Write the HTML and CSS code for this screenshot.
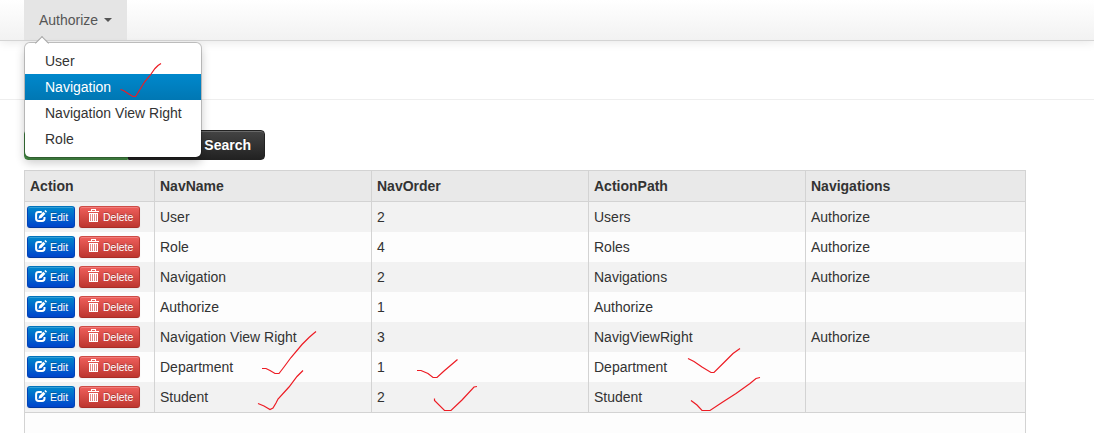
FILE: index.html
```
<!DOCTYPE html>
<html lang="en">
<head>
<meta charset="utf-8">
<title>Navigation</title>
<link rel="stylesheet" href="styles.css">
</head>
<body>
<svg class="sprite" aria-hidden="true">
  <symbol id="edit" viewBox="0 0 12 12">
    <path d="M6.800 2H3.500Q1.100 2 1.100 4.400V8.500Q1.100 10.900 3.500 10.900H7.100Q9.500 10.900 9.500 8.500V7" fill="none" stroke="#fff" stroke-width="2"/>
    <path d="M3.500 8.700L4.300 5.700L8.300 1.700L10.400 3.700L6.400 7.900ZM9.300 1L10.400 0L12 1.600L11 2.700Z" fill="#fff"/>
  </symbol>
  <symbol id="trash" viewBox="0 0 11 13">
    <path d="M3 0H8V2H11V3H0V2H3ZM4 1V2H7V1Z" fill="#fff" fill-rule="evenodd"/>
    <path d="M1 4H10V13H1Z" fill="#fff" fill-opacity=".35"/>
    <path d="M1.500 4V13M3.500 4V13M5.500 4V13M7.500 4V13M9.500 4V13M1 4.500H10M1 12.500H10" fill="none" stroke="#fff"/>
  </symbol>
</svg>
<nav class="navbar">
  <div class="nav-item">
    <a class="nav-link">Authorize<span class="caret"></span></a>
    <ul class="menu">
      <li>User</li>
      <li class="active">Navigation</li>
      <li>Navigation View Right</li>
      <li>Role</li>
    </ul>
  </div>
</nav>
<main class="page">
  <hr class="rule">
  <div class="toolbar"><button class="tool create"></button><button class="tool search">Search</button></div>
  <div class="grid">
    <div class="row head"><div>Action</div><div>NavName</div><div>NavOrder</div><div>ActionPath</div><div>Navigations</div></div>
    <div class="row"><div class="actions"><a class="btn edit"><svg><use href="#edit"/></svg>Edit</a><a class="btn delete"><svg><use href="#trash"/></svg>Delete</a></div><div>User</div><div>2</div><div>Users</div><div>Authorize</div></div>
    <div class="row"><div class="actions"><a class="btn edit"><svg><use href="#edit"/></svg>Edit</a><a class="btn delete"><svg><use href="#trash"/></svg>Delete</a></div><div>Role</div><div>4</div><div>Roles</div><div>Authorize</div></div>
    <div class="row"><div class="actions"><a class="btn edit"><svg><use href="#edit"/></svg>Edit</a><a class="btn delete"><svg><use href="#trash"/></svg>Delete</a></div><div>Navigation</div><div>2</div><div>Navigations</div><div>Authorize</div></div>
    <div class="row"><div class="actions"><a class="btn edit"><svg><use href="#edit"/></svg>Edit</a><a class="btn delete"><svg><use href="#trash"/></svg>Delete</a></div><div>Authorize</div><div>1</div><div>Authorize</div><div></div></div>
    <div class="row"><div class="actions"><a class="btn edit"><svg><use href="#edit"/></svg>Edit</a><a class="btn delete"><svg><use href="#trash"/></svg>Delete</a></div><div>Navigation View Right</div><div>3</div><div>NavigViewRight</div><div>Authorize</div></div>
    <div class="row"><div class="actions"><a class="btn edit"><svg><use href="#edit"/></svg>Edit</a><a class="btn delete"><svg><use href="#trash"/></svg>Delete</a></div><div>Department</div><div>1</div><div>Department</div><div></div></div>
    <div class="row"><div class="actions"><a class="btn edit"><svg><use href="#edit"/></svg>Edit</a><a class="btn delete"><svg><use href="#trash"/></svg>Delete</a></div><div>Student</div><div>2</div><div>Student</div><div></div></div>
    <div class="footer"></div>
  </div>
</main>
<svg class="marks" viewBox="0 0 1094 433" aria-hidden="true">
  <path d="M120.500 89.500L123.500 90.500L128 93.500L133 96.500H135.500L139 91L144.500 82L150 75.500L155 68.500L158 65.500L161 63.500"/>
  <path d="M262 368.500H266L270 370.500L275 373.500H279L284 367L291 357.500L302 344.500L309 337.500L313 334L316 331.500"/>
  <path d="M258 403.500L264 406L270 409.500L273 408L276 403L278 399L289 387L297 376.500L303 370.500"/>
  <path d="M417 370.500H421L428 373.500L433 377.500H437L444 371L457.500 359.500"/>
  <path d="M434.500 398.500V400.500L444.500 410.500H451L462 400L474 387L477 386.500"/>
  <path d="M688 358.500L694 361.500L702 367L711 372.500H714L725 361.500L733 353.500L740 348.500"/>
  <path d="M691 400.500L697 405L702 410.500H710L722 402.500L736 393.500L750 383.500L756 378.500L760 377.500"/>
</svg>
</body>
</html>
```
FILE: styles.css
```
* { box-sizing: border-box; }
body {
  margin: 0;
  height: 433px;
  overflow: hidden;
  background: #fff;
  color: #333;
  font: 14px/20px "Liberation Sans", Arial, sans-serif;
}
.sprite { position: absolute; width: 0; height: 0; }
.navbar {
  position: relative;
  z-index: 2;
  height: 41px;
  padding-left: 24px;
  background: linear-gradient(#fff, #f2f2f2);
  border-bottom: 1px solid #d4d4d4;
  box-shadow: 0 1px 10px rgba(0, 0, 0, .1);
}
.nav-item { position: relative; width: 103px; }
.nav-link {
  display: flex;
  align-items: center;
  height: 40px;
  padding-left: 15px;
  background: #e5e5e5;
  color: #555;
}
.caret {
  margin-left: 6px;
  border: 4px solid transparent;
  border-top-color: #555;
  border-bottom: 0;
}
.menu {
  position: absolute;
  top: 42px;
  left: 0;
  width: 178px;
  height: 116px;
  margin: 0;
  padding: 5px 0;
  list-style: none;
  background: #fff;
  background-clip: padding-box;
  border: 1px solid rgba(0, 0, 0, .2);
  border-radius: 6px;
  box-shadow: 0 5px 10px rgba(0, 0, 0, .2);
}
.menu::before {
  content: "";
  position: absolute;
  top: -5px;
  left: 12px;
  width: 9px;
  height: 9px;
  background: linear-gradient(135deg, #fff 60%, transparent 60%);
  border: 1px solid #aaa;
  border-width: 1px 0 0 1px;
  transform: rotate(45deg);
}
.menu li { height: 26px; padding: 3px 20px; white-space: nowrap; }
.menu .active { color: #fff; background: linear-gradient(#0088cc, #0077b3); }
.page { padding: 58px 0 0 24px; }
.rule {
  height: 1px;
  margin: 0 0 0 -24px;
  border: 0;
  background: #eee;
}
.toolbar { display: flex; height: 30px; margin-top: 30px; }
.tool {
  height: 30px;
  padding: 0;
  border: 1px solid;
  font: bold 14px/20px "Liberation Sans", Arial, sans-serif;
  color: #fff;
  box-shadow: inset 0 1px 0 rgba(255, 255, 255, .2);
}
.create {
  width: 104px;
  background: linear-gradient(#62c462, #468c46);
  border-color: #428b42;
  border-radius: 4px 0 0 4px;
}
.search {
  width: 137px;
  padding-right: 13px;
  text-align: right;
  background: linear-gradient(#444, #222);
  border-color: #222;
  border-radius: 0 4px 4px 0;
  text-shadow: 0 -1px 0 rgba(0, 0, 0, .25);
}
.grid {
  width: 1002px;
  margin-top: 10px;
  border: 1px solid #d3d3d3;
  border-bottom: 0;
}
.row {
  display: grid;
  grid-template-columns: 130px 217px 217px 217px 219px;
  height: 30px;
  background: #fdfdfd;
}
.row:nth-child(even) { background: #f2f2f2; }
.row > div { padding: 5px; border-right: 1px solid #d3d3d3; }
.row > div:last-child { border-right: 0; }
.row.head {
  height: 31px;
  background: #e9e9e9;
  border-bottom: 1px solid #d3d3d3;
  font-weight: bold;
}
.row > .actions { display: flex; gap: 4px; padding: 4px 2px; }
.btn {
  display: flex;
  align-items: flex-start;
  height: 22px;
  padding-top: 2px;
  border: 1px solid;
  border-radius: 3px;
  color: #fff;
  font-size: 10.5px;
  line-height: 16px;
  box-shadow: inset 0 1px 0 rgba(255, 255, 255, .2), 0 1px 2px rgba(0, 0, 0, .05);
  text-shadow: 0 -1px 0 rgba(0, 0, 0, .25);
}
.edit {
  width: 48px;
  padding-left: 7px;
  background: linear-gradient(#0088cc, #0044cc);
  border-color: #0074bd #0044b8 #0038a0;
}
.edit svg { width: 12px; height: 12px; margin: 1px 3px 0 0; }
.delete {
  width: 61px;
  padding-left: 8px;
  background: linear-gradient(#ee5f5b, #bd362f);
  border-color: #ce4b46 #b93831 #a92d27;
}
.delete svg { width: 11px; height: 13px; margin-right: 4px; }
.footer { height: 22px; background: #fdfdfd; border-top: 1px solid #d3d3d3; }
.marks {
  position: absolute;
  z-index: 3;
  top: 0;
  left: 0;
  width: 1094px;
  height: 433px;
  pointer-events: none;
}
.marks path { fill: none; stroke: #ed1c24; stroke-width: 1.2; }
```
